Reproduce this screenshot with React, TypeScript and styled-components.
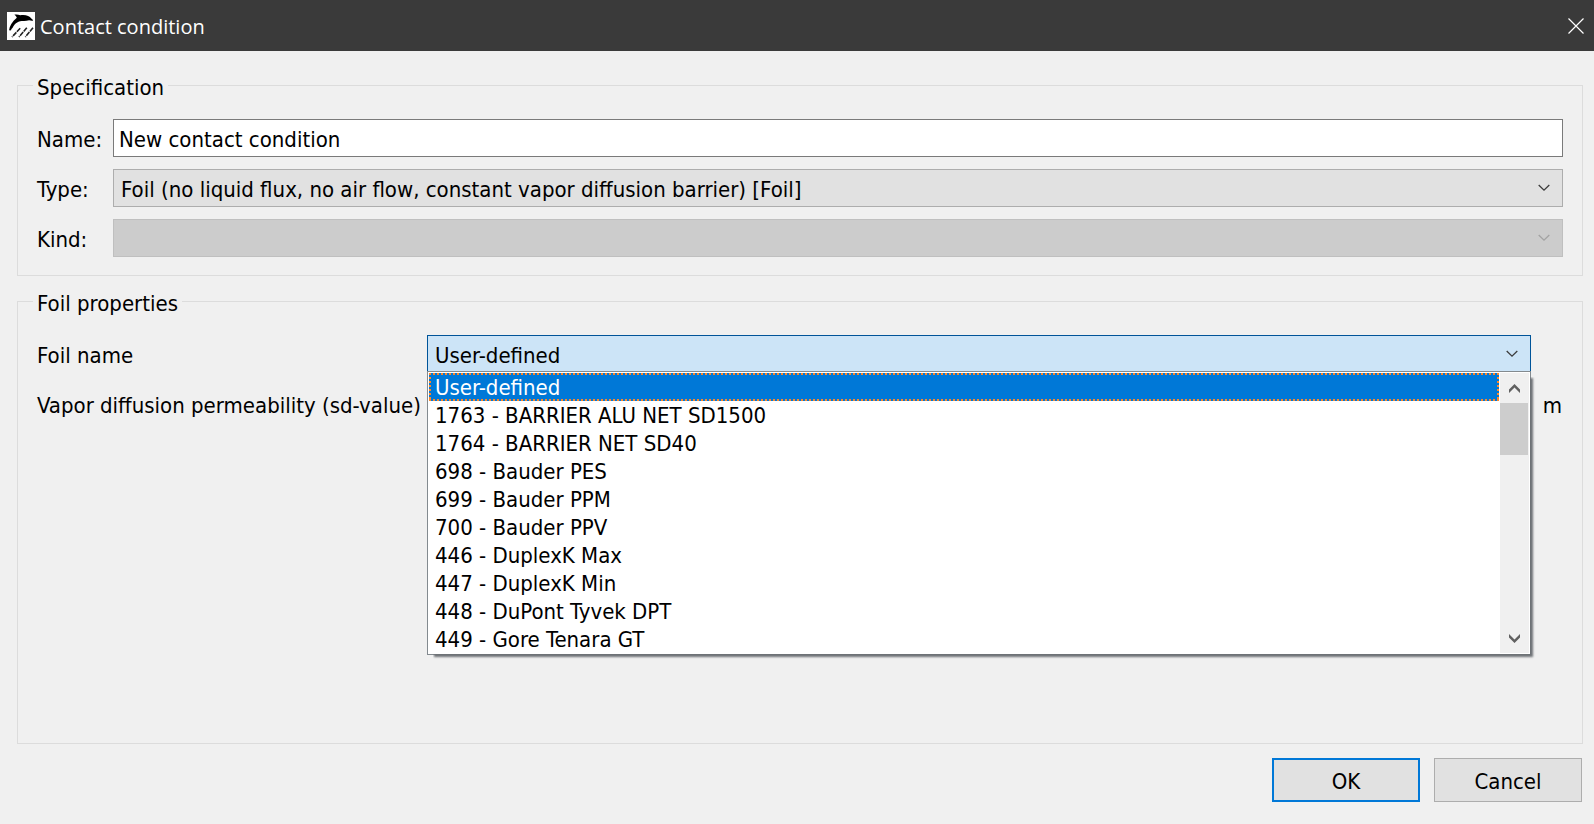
import React from 'react';
import styled, { createGlobalStyle, css } from 'styled-components';

const GlobalStyle = createGlobalStyle`
  *, *::before, *::after { box-sizing: border-box; }
  body {
    margin: 0;
    background: #f0f0f0;
    color: #000;
    font: 22px/28px "DejaVu Sans Condensed", "DejaVu Sans", sans-serif;
  }
  button, input, select { font: inherit; color: inherit; border-radius: 0; }
`;

const Dialog = styled.div`
  display: flex;
  flex-direction: column;
  min-height: 100vh;
`;

const TitleBar = styled.header`
  display: flex;
  align-items: center;
  gap: 5px;
  height: 51px;
  padding: 0 0 0 7px;
  background: #3a3a3a;
  color: #fff;
`;

const AppIcon = styled.svg`
  flex: none;
  width: 28px;
  height: 28px;
`;

const Title = styled.h1`
  flex: 1;
  margin: 0;
  padding-top: 2px;
  font: 400 20px/28px "Open Sans", "Noto Sans", sans-serif;
`;

const CloseButton = styled.button`
  display: flex;
  align-items: center;
  justify-content: flex-end;
  width: 48px;
  height: 100%;
  padding: 0 10px 0 0;
  border: 0;
  background: transparent;
`;

const Form = styled.form`
  flex: 1;
  display: flex;
  flex-direction: column;
  gap: 11px;
  padding: 20px 11px 22px 17px;
`;

const Group = styled.fieldset<{ $grow?: boolean }>`
  flex: ${(p) => (p.$grow ? '1 0 auto' : 'none')};
  min-width: 0;
  margin: 0;
  padding: 20px 19px 18px;
  border: 1px solid #dcdcdc;
`;

const Legend = styled.legend`
  height: 28px;
  margin-left: -4px;
  padding: 3px 4px 0;
`;

const Fields = styled.div<{ $columns: string; $gap: number }>`
  display: grid;
  grid-template-columns: ${(p) => p.$columns};
  gap: 12px ${(p) => p.$gap}px;
  align-items: center;
`;

const Label = styled.label`
  padding-top: 4px;
  white-space: nowrap;
`;

const Unit = styled.span`
  padding-top: 4px;
  padding-right: 1px;
  text-align: right;
`;

const TextBox = styled.input`
  width: 100%;
  min-width: 0;
  height: 38px;
  padding: 2px 5px 0;
  border: 1px solid #7a7a7a;
  background: #fff;
  outline: none;
`;

const SelectBox = styled.div`
  position: relative;
  display: grid;
  align-items: center;
  min-width: 0;
`;

const Select = styled.select<{ $open?: boolean }>`
  grid-area: 1 / 1;
  appearance: none;
  width: 100%;
  height: 38px;
  padding: 4px 40px 0 7px;
  border: 1px solid #adadad;
  background: #e1e1e1;
  outline: none;

  ${(p) =>
    p.$open &&
    css`
      border-color: #005499;
      background: #cce4f7;
    `}

  &:disabled {
    opacity: 1;
    border-color: #bfbfbf;
    background: #cccccc;
  }
`;

const Arrow = styled.svg<{ $muted?: boolean }>`
  grid-area: 1 / 1;
  justify-self: end;
  width: 12px;
  height: 8px;
  margin-right: 13px;
  fill: none;
  stroke: ${(p) => (p.$muted ? '#a3a3a3' : '#3c3c3c')};
  pointer-events: none;
`;

const Popup = styled.div`
  position: absolute;
  z-index: 1;
  top: 36px;
  left: 0;
  right: 0;
  display: flex;
  padding: 1px;
  border: 1px solid #838a8f;
  background: #fff;

  &::before {
    content: '';
    position: absolute;
    z-index: -1;
    top: 5px;
    left: 5px;
    right: 0;
    bottom: 0;
    box-shadow: 2px 2px 2px 1px #6e7276;
    clip-path: inset(0 -8px -8px 0);
  }
`;

const Options = styled.ul`
  flex: 1;
  margin: 0;
  padding: 0;
  list-style: none;
`;

const dash = '#ff8728 0 2px, #0078d7 2px 4px';

const Option = styled.li<{ $active?: boolean }>`
  height: 28px;
  padding: 1px 6px 0;
  white-space: nowrap;

  ${(p) =>
    p.$active &&
    css`
      margin-right: 1px;
      color: #fff;
      background:
        repeating-linear-gradient(90deg, ${dash}) top / 100% 2px no-repeat,
        repeating-linear-gradient(90deg, ${dash}) bottom / 100% 2px no-repeat,
        repeating-linear-gradient(${dash}) left / 2px 100% no-repeat,
        repeating-linear-gradient(${dash}) right / 2px 100% no-repeat,
        #0078d7;
    `}
`;

const ScrollBar = styled.div`
  display: flex;
  flex-direction: column;
  width: 29px;
  background: #f0f0f0;
`;

const ScrollButton = styled.button`
  display: flex;
  align-items: center;
  justify-content: center;
  height: 30px;
  padding: 0;
  border: 0;
  background: transparent;
`;

const ScrollTrack = styled.div`
  flex: 1;
`;

const ScrollThumb = styled.div`
  width: 28px;
  height: 52px;
  background: #cdcdcd;
`;

const Actions = styled.footer`
  display: flex;
  justify-content: flex-end;
  gap: 14px;
  margin: 3px 1px 0 0;
`;

const ActionButton = styled.button<{ $primary?: boolean }>`
  width: 148px;
  height: 44px;
  padding: 4px 0 0;
  border: ${(p) => (p.$primary ? '2px solid #0078d7' : '1px solid #adadad')};
  background: #e1e1e1;
`;

const foils = [
  'User-defined',
  '1763 - BARRIER ALU NET SD1500',
  '1764 - BARRIER NET SD40',
  '698 - Bauder PES',
  '699 - Bauder PPM',
  '700 - Bauder PPV',
  '446 - DuplexK Max',
  '447 - DuplexK Min',
  '448 - DuPont Tyvek DPT',
  '449 - Gore Tenara GT',
];

const Chevron = ({ muted }: { muted?: boolean }) => (
  <Arrow $muted={muted} viewBox="0 0 12 8" aria-hidden="true">
    <path d="M.7 1 6 6.2 11.3 1" strokeWidth="1.3" />
  </Arrow>
);

const Dolphin = () => (
  <AppIcon viewBox="0 0 28 28" aria-hidden="true">
    <path fill="#fff" d="M0 0h28v28H0z" />
    <path
      fill="#000"
      d="M2 18.500C2.500 14.500 5 9.500 9.800 5.800 9.300 4.400 8.500 3.300 7.300 2.700c2-.5 4.200-.2 5.900.5C18 2.300 22.500 3.500 24.300 6.600c.9.700 1.700 1.300 1.800 2-1 .5-2.600.1-4-.3-2.600.8-5 .9-7.400.6-4.600.4-7.600 3.300-9.200 7-.9.700-1.500 1.600-1.500 2.800-.5-.5-1.200-.5-2-.2z"
    />
    <path
      fill="none"
      stroke="#222"
      strokeWidth="1.600"
      strokeDasharray="4.800 .8"
      d="M13.200 16.300 5 25M19.800 15.800 12 25M26 15.800 18.300 25"
    />
  </AppIcon>
);

export default function App() {
  return (
    <>
      <GlobalStyle />
      <Dialog role="dialog" aria-labelledby="dialog-title">
        <TitleBar>
          <Dolphin />
          <Title id="dialog-title">Contact condition</Title>
          <CloseButton type="button" aria-label="Close">
            <svg width="16" height="16" viewBox="0 0 16 16" stroke="#fff" strokeWidth="1.200">
              <path d="M.5.5l15 15M15.500.5l-15 15" />
            </svg>
          </CloseButton>
        </TitleBar>

        <Form onSubmit={(e) => e.preventDefault()}>
          <Group>
            <Legend>Specification</Legend>
            <Fields $columns="68px 1fr" $gap={8}>
              <Label htmlFor="name">Name:</Label>
              <TextBox id="name" type="text" defaultValue="New contact condition" />

              <Label htmlFor="type">Type:</Label>
              <SelectBox>
                <Select id="type">
                  <option>Foil (no liquid flux, no air flow, constant vapor diffusion barrier) [Foil]</option>
                </Select>
                <Chevron />
              </SelectBox>

              <Label htmlFor="kind">Kind:</Label>
              <SelectBox>
                <Select id="kind" disabled />
                <Chevron muted />
              </SelectBox>
            </Fields>
          </Group>

          <Group $grow>
            <Legend>Foil properties</Legend>
            <Fields $columns="384px 1fr 26px" $gap={6}>
              <Label htmlFor="foil">Foil name</Label>
              <SelectBox>
                <Select id="foil" $open defaultValue={foils[0]}>
                  {foils.map((foil) => (
                    <option key={foil}>{foil}</option>
                  ))}
                </Select>
                <Chevron />
                <Popup>
                  <Options role="listbox" aria-label="Foil name">
                    {foils.map((foil, i) => (
                      <Option key={foil} role="option" aria-selected={i === 0} $active={i === 0}>
                        {foil}
                      </Option>
                    ))}
                  </Options>
                  <ScrollBar>
                    <ScrollButton type="button" aria-label="Scroll up">
                      <svg width="11" height="9" viewBox="0 0 11 9" fill="#606060">
                        <path d="M5.500 0 11 5.500V9L5.500 3.500 0 9V5.500z" />
                      </svg>
                    </ScrollButton>
                    <ScrollTrack>
                      <ScrollThumb />
                    </ScrollTrack>
                    <ScrollButton type="button" aria-label="Scroll down">
                      <svg width="11" height="9" viewBox="0 0 11 9" fill="#606060">
                        <path d="M5.500 9 0 3.500V0l5.500 5.500L11 0v3.500z" />
                      </svg>
                    </ScrollButton>
                  </ScrollBar>
                </Popup>
              </SelectBox>
              <span />

              <Label htmlFor="sd-value">Vapor diffusion permeability (sd-value)</Label>
              <TextBox id="sd-value" type="text" />
              <Unit>m</Unit>
            </Fields>
          </Group>

          <Actions>
            <ActionButton type="submit" $primary>
              OK
            </ActionButton>
            <ActionButton type="button">Cancel</ActionButton>
          </Actions>
        </Form>
      </Dialog>
    </>
  );
}
